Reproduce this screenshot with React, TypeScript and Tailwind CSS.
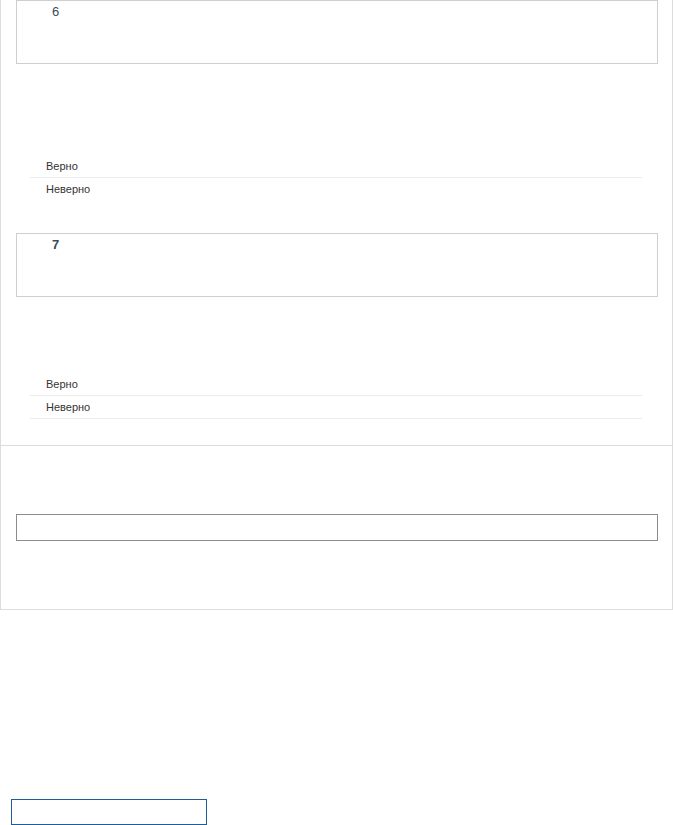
const OPTIONS = ["Верно", "Неверно"];

function QuestionBox({ num, bold }: { num: number; bold?: boolean }) {
  return (
    <div
      className={
        "ml-[15px] mr-[14px] h-[64px] border border-[#cfcfcf] pl-[35px] pt-[3px] text-[13px] leading-[16px] text-[#3b4a58] " +
        (bold ? "font-bold" : "")
      }
    >
      {num}
    </div>
  );
}

function Choices({ lastLine }: { lastLine?: boolean }) {
  return (
    <ul className="ml-[29px] mr-[30px]">
      {OPTIONS.map((o, i) => (
        <li
          key={o}
          className={
            "h-[23px] pl-[16px] text-[11px] leading-[23px] text-[#333] " +
            (i < OPTIONS.length - 1 || lastLine ? "border-b border-[#ececec]" : "")
          }
        >
          {o}
        </li>
      ))}
    </ul>
  );
}

export default function App() {
  return (
    <div className="min-h-[825px] bg-white font-['Liberation_Sans',Arial,sans-serif]">
      <div className="border-x border-b border-[#dcdcdc]">
        <div>
          <QuestionBox num={6} />
          <div className="h-[91px]" />
          <Choices />
          <div className="h-[32px]" />
          <QuestionBox num={7} bold />
          <div className="h-[76px]" />
          <Choices lastLine />
          <div className="h-[26px]" />
        </div>
        <div className="border-t border-[#dcdcdc] pt-[68px] pb-[68px]">
          <div className="ml-[15px] mr-[14px] h-[27px] border border-[#8c8c8c]" />
        </div>
      </div>
      <div className="pl-[11px] pt-[189px]">
        <button
          type="button"
          className="block h-[26px] w-[196px] border border-[#1f5d99] bg-white"
        />
      </div>
    </div>
  );
}
